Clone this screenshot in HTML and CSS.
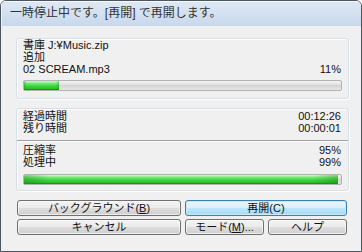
FILE: index.html
```html
<!DOCTYPE html>
<html lang="ja">
<head>
  <meta charset="UTF-8" />
  <title>一時停止中</title>
  <link rel="stylesheet" href="styles.css">
</head>
<body>
  <div class="window">
    <div class="titlebar">一時停止中です。[再開] で再開します。</div>

    <div class="client">
      <div class="group">
        <div class="row">書庫 J:¥Music.zip</div>
        <div class="row">追加</div>
        <div class="row split">
          <span>02 SCREAM.mp3</span>
          <span>11%</span>
        </div>
        <div class="bar"><div class="fill" style="width: 11%"></div></div>
      </div>

      <div class="group second">
        <div class="row split"><span>経過時間</span><span>00:12:26</span></div>
        <div class="row split"><span>残り時間</span><span>00:00:01</span></div>
        <div class="sep"></div>
        <div class="row split top-gap"><span>圧縮率</span><span>95%</span></div>
        <div class="row split"><span>処理中</span><span>99%</span></div>
        <div class="bar lower"><div class="fill" style="width: 99%"></div></div>
      </div>

      <div class="buttons">
        <button class="btn">バックグラウンド(<u>B</u>)</button>
        <button class="btn default wide">再開(C)</button>
        <button class="btn">キャンセル</button>
        <button class="btn">モード(<u>M</u>)...</button>
        <button class="btn">ヘルプ</button>
      </div>
    </div>
  </div>
</body>
</html>
```

FILE: styles.css
```css
* {
  box-sizing: border-box;
  margin: 0;
  padding: 0;
}

body {
  font-family: "Liberation Sans", "Noto Sans CJK JP", sans-serif;
  font-size: 11px;
  color: #111;
  background: #fff;
}

.window {
  width: 362px;
  height: 252px;
  border: 1px solid #4d5560;
  border-radius: 6px 6px 0 0;
  background: #f0f0f0;
  overflow: hidden;
  display: flex;
  flex-direction: column;
}

.titlebar {
  height: 25px;
  line-height: 24px;
  padding-left: 9px;
  color: #333;
  font-size: 12px;
  background: linear-gradient(to bottom, #dfe9f5, #c8d8eb);
  box-shadow: inset 1px 1px 0 rgba(255, 255, 255, 0.7);
}

.client {
  flex: 1;
  padding: 12px 12px 0 15px;
}

.group {
  border: 1px solid #d5dfe5;
  border-radius: 3px;
  box-shadow: inset 1px 1px 0 #fff, 1px 1px 0 #fff;
  padding: 0 0 7px;
}

.group.second {
  margin-top: 9px;
  padding: 1px 0 5px;
}

.row {
  height: 12px;
  line-height: 12px;
  padding: 0 7px 0 6px;
  white-space: nowrap;
}

.split {
  display: flex;
  justify-content: space-between;
}

.top-gap {
  margin-top: 2px;
}

.sep {
  margin-top: 6px;
  height: 2px;
  border-top: 1px solid #a0a0a0;
  border-bottom: 1px solid #fff;
}

.bar {
  margin: 5px 6px 0 6px;
  height: 11px;
  border: 1px solid #b2b2b2;
  border-radius: 2px;
  background: linear-gradient(to bottom, #f3f3f3, #e0e0e0 45%, #d4d4d4 50%, #e6e6e6);
  overflow: hidden;
}

.bar.lower {
  margin-top: 6px;
}

.fill {
  height: 100%;
  background:
    linear-gradient(to right, rgba(10, 120, 10, 0.35), rgba(255, 255, 255, 0) 8%, rgba(255, 255, 255, 0) 92%, rgba(10, 120, 10, 0.35)),
    linear-gradient(to bottom, #d8f8d8 0%, #7de87d 25%, #3dd63d 55%, #22b422 100%);
  box-shadow: inset 0 -1px 0 #159515;
}

.buttons {
  margin-top: 9px;
  margin-left: 1px;
  display: grid;
  grid-template-columns: 164px 79px 79px;
  grid-template-rows: 16px 16px;
  column-gap: 4px;
  row-gap: 3px;
}

.btn {
  font-family: "Liberation Sans", "Noto Sans CJK JP", sans-serif;
  font-size: 11px;
  line-height: 14px;
  color: #111;
  border: 1px solid #707070;
  border-radius: 3px;
  background: linear-gradient(to bottom, #f2f2f2 0%, #ebebeb 50%, #dddddd 51%, #cfcfcf 100%);
  box-shadow: inset 0 0 0 1px rgba(255, 255, 255, 0.6);
}

.btn.wide {
  grid-column: span 2;
}

.btn.default {
  border-color: #3c7fb1;
  background: linear-gradient(to bottom, #eaf6fd 0%, #d9f0fc 50%, #bee6fd 51%, #a7d9f5 100%);
  box-shadow: inset 0 0 0 1px #cbe9fb;
}

.btn u {
  text-underline-offset: 1px;
}
```
